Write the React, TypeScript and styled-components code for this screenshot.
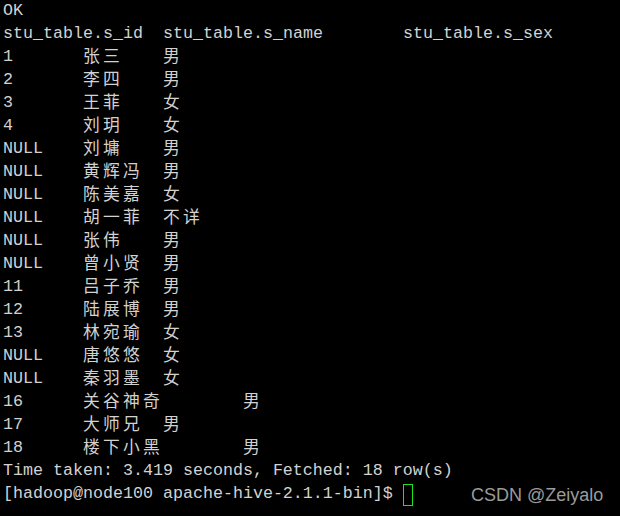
import React from "react";
import styled, { createGlobalStyle } from "styled-components";

const Global = createGlobalStyle`
  html, body { margin: 0; padding: 0; background: #000; }
  body { width: 620px; height: 516px; overflow: hidden; }
`;

const COL = 10;

const Screen = styled.div`
  position: relative;
  width: 620px;
  height: 516px;
  background: #000;
  color: #d2d2d2;
  font-family: "Liberation Mono", "DejaVu Sans Mono", monospace;
  font-size: 16.6667px;
  padding: 0 0 0 3px;
  box-sizing: border-box;
  overflow: hidden;
`;

const Line = styled.div<{ $first?: boolean }>`
  height: 23px;
  line-height: 23px;
  white-space: pre;
  margin-top: ${(p) => (p.$first ? "-1px" : "0")};
`;

const Cell = styled.span<{ $cols: number }>`
  display: inline-block;
  width: ${(p) => p.$cols * COL}px;
  white-space: pre;
`;

const Wide = styled.span`
  display: inline-block;
  width: ${COL * 2}px;
  font-family: "Noto Sans CJK SC", sans-serif;
  font-size: 16.8px;
  line-height: 21px;
  height: 23px;
  vertical-align: top;
  overflow: visible;
`;

const Cursor = styled.span`
  display: inline-block;
  width: 8px;
  height: 20px;
  border: 1px solid #19e619;
  vertical-align: top;
  margin-top: 2px;
`;

const Watermark = styled.div`
  position: absolute;
  left: 471px;
  top: 484px;
  font-family: "Liberation Sans", Arial, sans-serif;
  font-size: 18px;
  line-height: 22px;
  color: #9b9b9b;
`;

const Cjk = ({ text }: { text: string }) => (
  <>
    {Array.from(text).map((ch, i) => (
      <Wide key={i}>{ch}</Wide>
    ))}
  </>
);

const rows: [string, string, string][] = [
  ["1", "张三", "男"],
  ["2", "李四", "男"],
  ["3", "王菲", "女"],
  ["4", "刘玥", "女"],
  ["NULL", "刘墉", "男"],
  ["NULL", "黄辉冯", "男"],
  ["NULL", "陈美嘉", "女"],
  ["NULL", "胡一菲", "不详"],
  ["NULL", "张伟", "男"],
  ["NULL", "曾小贤", "男"],
  ["11", "吕子乔", "男"],
  ["12", "陆展博", "男"],
  ["13", "林宛瑜", "女"],
  ["NULL", "唐悠悠", "女"],
  ["NULL", "秦羽墨", "女"],
  ["16", "关谷神奇", "男"],
  ["17", "大师兄", "男"],
  ["18", "楼下小黑", "男"],
];

const tabTo = (start: number, len: number) => {
  const end = start + len;
  return Math.floor(end / 8) * 8 + 8 - start;
};

export default function App() {
  return (
    <>
      <Global />
      <Screen>
        <Line $first>OK</Line>
        <Line>
          <Cell $cols={16}>stu_table.s_id</Cell>
          <Cell $cols={24}>stu_table.s_name</Cell>
          stu_table.s_sex
        </Line>
        {rows.map(([id, name, sex], i) => (
          <Line key={i}>
            <Cell $cols={8}>{id}</Cell>
            <Cell $cols={tabTo(8, Array.from(name).length * 2)}>
              <Cjk text={name} />
            </Cell>
            <Cjk text={sex} />
          </Line>
        ))}
        <Line>Time taken: 3.419 seconds, Fetched: 18 row(s)</Line>
        <Line>
          [hadoop@node100 apache-hive-2.1.1-bin]$ <Cursor />
        </Line>
        <Watermark>CSDN @Zeiyalo</Watermark>
      </Screen>
    </>
  );
}
